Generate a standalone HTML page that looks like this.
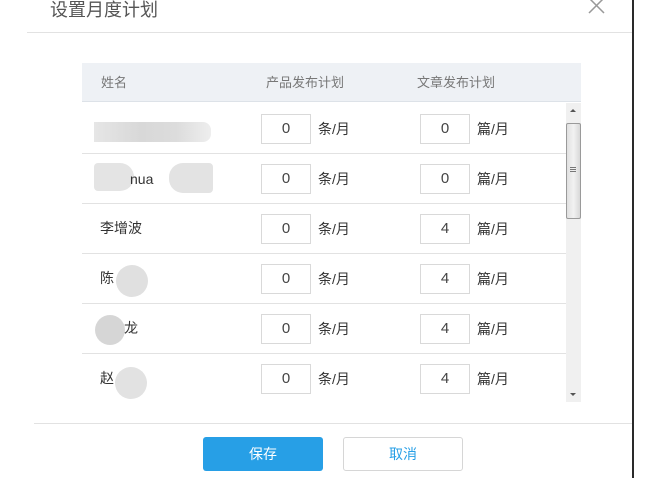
<!DOCTYPE html>
<html><head><meta charset="utf-8"><style>
*{margin:0;padding:0;box-sizing:border-box}
body{width:654px;height:492px;background:#fff;position:relative;overflow:hidden;font-family:"Liberation Sans","Noto Sans CJK SC",sans-serif;color:#333}
.a{position:absolute}
.title{left:50px;top:-4px;font-size:18px;color:#555}
.hl{height:1px;background:#e2e2e2}
.inp{position:absolute;width:50px;height:30px;border:1px solid #d9d9d9;text-align:center;line-height:28px;font-size:15px;color:#444}
.u{position:absolute;font-size:14px;color:#333;line-height:30px}
.nm{position:absolute;left:100px;font-size:14px;line-height:20px}
.blur{position:absolute;background:#ddd}
.th{position:absolute;top:63px;height:39px;line-height:39px;font-size:13px;color:#777}
</style></head><body>
<div class="a title">设置月度计划</div>
<svg class="a" style="left:588px;top:0" width="18" height="15"><path d="M1,-2 L16,13 M16,-2 L1,13" stroke="#999" stroke-width="1.5" fill="none"/></svg>
<div class="a hl" style="left:27px;top:32px;width:605px"></div>
<div class="a" style="left:632px;top:0;width:2px;height:478px;background:#2a2a2a"></div>

<div class="a" style="left:82px;top:63px;width:499px;height:39px;background:#eef1f5;border-bottom:1px solid #dde2e8"></div>
<div class="th" style="left:101px">姓名</div>
<div class="th" style="left:266px">产品发布计划</div>
<div class="th" style="left:417px">文章发布计划</div>

<!-- rows -->
<div class="a hl" style="left:82px;top:153px;width:484px"></div>
<div class="a hl" style="left:82px;top:203px;width:484px"></div>
<div class="a hl" style="left:82px;top:253px;width:484px"></div>
<div class="a hl" style="left:82px;top:303px;width:484px"></div>
<div class="a hl" style="left:82px;top:353px;width:484px"></div>

<div class="blur" style="left:94px;top:122px;width:117px;height:20px;background:linear-gradient(90deg,#e6e6e6,#d8d8d8 40%,#dcdcdc 70%,#eee);border-radius:0 8px 8px 0"></div>

<div class="blur" style="left:94px;top:163px;width:40px;height:28px;background:#e4e4e4;border-radius:4px 14px 14px 4px"></div>
<div class="nm" style="left:130px;top:169px">nua</div>
<div class="blur" style="left:169px;top:163px;width:44px;height:30px;background:#e3e3e3;border-radius:14px 4px 4px 14px"></div>

<div class="nm" style="top:218px">李增波</div>
<div class="nm" style="top:268px">陈</div>
<div class="blur" style="left:116px;top:265px;width:32px;height:32px;border-radius:50%;background:#e0e0e0"></div>
<div class="blur" style="left:95px;top:315px;width:30px;height:30px;border-radius:50%;background:#d6d6d6"></div>
<div class="nm" style="left:124px;top:318px">龙</div>
<div class="nm" style="top:368px">赵</div>
<div class="blur" style="left:115px;top:367px;width:32px;height:32px;border-radius:50%;background:#e2e2e2"></div>

<div class="inp" style="left:261px;top:114px">0</div><div class="u" style="left:318px;top:114px">条/月</div>
<div class="inp" style="left:420px;top:114px">0</div><div class="u" style="left:477px;top:114px">篇/月</div>
<div class="inp" style="left:261px;top:164px">0</div><div class="u" style="left:318px;top:164px">条/月</div>
<div class="inp" style="left:420px;top:164px">0</div><div class="u" style="left:477px;top:164px">篇/月</div>
<div class="inp" style="left:261px;top:214px">0</div><div class="u" style="left:318px;top:214px">条/月</div>
<div class="inp" style="left:420px;top:214px">4</div><div class="u" style="left:477px;top:214px">篇/月</div>
<div class="inp" style="left:261px;top:264px">0</div><div class="u" style="left:318px;top:264px">条/月</div>
<div class="inp" style="left:420px;top:264px">4</div><div class="u" style="left:477px;top:264px">篇/月</div>
<div class="inp" style="left:261px;top:314px">0</div><div class="u" style="left:318px;top:314px">条/月</div>
<div class="inp" style="left:420px;top:314px">4</div><div class="u" style="left:477px;top:314px">篇/月</div>
<div class="inp" style="left:261px;top:364px">0</div><div class="u" style="left:318px;top:364px">条/月</div>
<div class="inp" style="left:420px;top:364px">4</div><div class="u" style="left:477px;top:364px">篇/月</div>

<!-- scrollbar -->
<div class="a" style="left:566px;top:103px;width:15px;height:299px;background:#f0f0f0"></div>
<div class="a" style="left:570px;top:109px;width:0;height:0;border-left:3px solid transparent;border-right:3px solid transparent;border-bottom:3px solid #555"></div>
<div class="a" style="left:570px;top:393px;width:0;height:0;border-left:3px solid transparent;border-right:3px solid transparent;border-top:3px solid #555"></div>
<div class="a" style="left:566px;top:123px;width:15px;height:96px;background:linear-gradient(90deg,#e0e0e0,#f2f2f2,#d8d8d8);border:1px solid #9a9a9a;border-radius:2px"></div>
<div class="a" style="left:570px;top:167px;width:6px;height:5px;border-top:1px solid #777;border-bottom:1px solid #777"><div style="margin-top:1px;height:1px;background:#777"></div></div>

<div class="a hl" style="left:34px;top:423px;width:598px"></div>
<div class="a" style="left:203px;top:437px;width:120px;height:34px;background:#279fe6;border-radius:3px;color:#fff;font-size:14px;text-align:center;line-height:34px">保存</div>
<div class="a" style="left:343px;top:437px;width:120px;height:34px;background:#fff;border:1px solid #d6d6d6;border-radius:3px;color:#279fe6;font-size:14px;text-align:center;line-height:32px">取消</div>
</body></html>
